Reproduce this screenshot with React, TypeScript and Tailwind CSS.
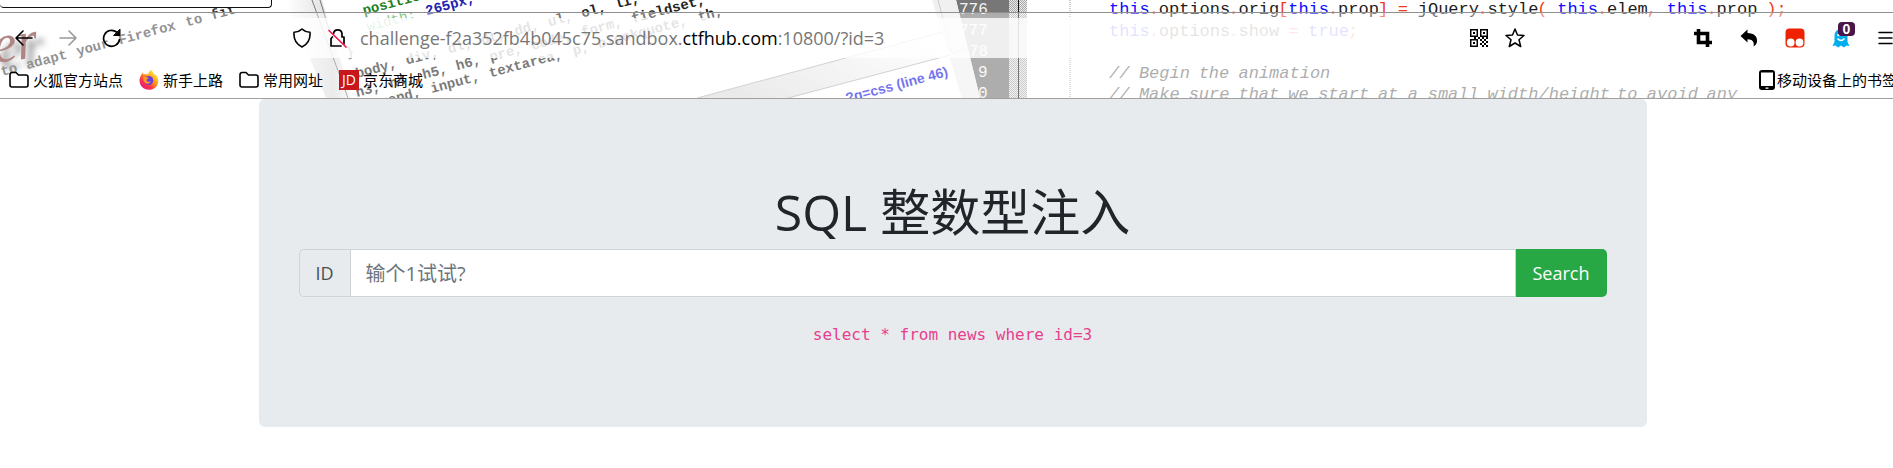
import React from "react";

type Token = { text: string; color: string; bold?: boolean };

/* Sets each word of a monospaced line on a fixed column pitch. */
function MonoLine({
  tokens,
  x,
  y,
  pitch,
  size,
  rotate = 0,
  italic = false,
}: {
  tokens: Token[];
  x: number;
  y: number;
  pitch: number;
  size: number;
  rotate?: number;
  italic?: boolean;
}) {
  const words: { text: string; col: number; color: string; bold?: boolean }[] = [];
  let col = 0;
  for (const token of tokens) {
    for (const match of token.text.matchAll(/\S+/g)) {
      words.push({ text: match[0], col: col + (match.index ?? 0), color: token.color, bold: token.bold });
    }
    col += token.text.length;
  }
  return (
    <text
      transform={`translate(${x} ${y}) rotate(${rotate})`}
      fontFamily="'Liberation Mono', monospace"
      fontSize={size}
      fontStyle={italic ? "italic" : "normal"}
    >
      {words.map((w) => (
        <tspan key={w.col} x={w.col * pitch} y={0} fill={w.color} fontWeight={w.bold ? 700 : 400}>
          {w.text}
        </tspan>
      ))}
    </text>
  );
}

const BLUE = "#0c0cff";
const RED = "#f03a1c";
const INK = "#1c1c1c";

function ThemeArtwork() {
  return (
    <svg className="absolute left-0 top-0" width="1907" height="98" viewBox="0 0 1907 98" aria-hidden="true">
      <defs>
        <linearGradient id="paper" x1="0" x2="1">
          <stop offset="0" stopColor="#fff" />
          <stop offset="0.7" stopColor="#dedede" />
          <stop offset="1" stopColor="#f6f6f6" />
        </linearGradient>
        <linearGradient id="band" x1="0" x2="1" y1="0.6" y2="0.2">
          <stop offset="0" stopColor="#dcdcdc" />
          <stop offset="1" stopColor="#ffffff" />
        </linearGradient>
        <pattern id="dither" width="2" height="2" patternUnits="userSpaceOnUse">
          <rect width="2" height="2" fill="#e9e9e9" />
          <rect width="1" height="1" fill="#a8a8a8" />
          <rect x="1" y="1" width="1" height="1" fill="#a8a8a8" />
        </pattern>
        <filter id="soft" x="-30%" y="-30%" width="160%" height="160%">
          <feGaussianBlur stdDeviation="3" />
        </filter>
      </defs>

      <text transform="translate(2 70) rotate(-8)" fontFamily="'Liberation Serif', serif" fontStyle="italic" fontSize="54" fill="#444" filter="url(#soft)">er</text>
      <text transform="translate(-5 63) rotate(-8)" fontFamily="'Liberation Serif', serif" fontStyle="italic" fontSize="54" fill="#7c3535">er</text>
      <MonoLine tokens={[{ text: "to adapt your Firefox to ", color: "#4a4a4a", bold: true }, { text: "fit", color: "#333", bold: true }]} x={2} y={76} pitch={8.7} size={14} rotate={-15} />

      <path d="M286 0H322L352 98H326Z" fill="url(#paper)" />
      <path d="M312 0L348 98M320 0L334 46" stroke="#777" strokeWidth="1" fill="none" />
      <MonoLine tokens={[{ text: "position: absolute", color: "#1d7f1d", bold: true }]} x={364} y={15} pitch={8.7} size={14} rotate={-15} />
      <MonoLine tokens={[{ text: "width: ", color: "#2f9f2f" }, { text: "265px,", color: "#2020b0", bold: true }]} x={368} y={31} pitch={8.7} size={14} rotate={-15} />
      <MonoLine tokens={[{ text: "}", color: "#222" }]} x={347} y={57} pitch={8.7} size={14} rotate={-15} />
      <MonoLine tokens={[{ text: "body, div, dl, dt, dd, ul, ol, li, h1,", color: "#222", bold: true }]} x={357} y={78} pitch={8.65} size={14} rotate={-15} />
      <MonoLine tokens={[{ text: "h3, h4, h5, h6, pre, code, form, fieldset,", color: "#222", bold: true }]} x={357} y={97} pitch={8.65} size={14} rotate={-15} />
      <MonoLine tokens={[{ text: "legend, input, textarea, p, blockquote, th,", color: "#222", bold: true }]} x={365} y={111} pitch={8.65} size={14} rotate={-15} />

      <path d="M697 98L950 30V55L790 98Z" fill="url(#band)" />
      <path d="M697 98L950 30M788 98L950 55M936 0L943 20" stroke="#b4b4b4" fill="none" />
      <text transform="translate(847 103) rotate(-15)" fontFamily="'Liberation Sans', sans-serif" fontWeight="700" fontSize="14" fill="#1616e6">?g=css (line 46)</text>

      <path d="M956 0H1009V98H980Z" fill="#777" />
      <path d="M932 0H956L980 98H962Z" fill="#f0f0f0" />
      <path d="M952 53L968 48M952 53L938 0" stroke="#c8c8c8" fill="none" />
      <rect x="1009" width="18" height="98" fill="url(#dither)" />
      <rect x="1018" width="1" height="98" fill="#111" />
      <path d="M1070 0V98" stroke="#999" strokeDasharray="1 1" />
      <g fill="#f4f4f4" fontFamily="'Liberation Mono', monospace" fontSize="16">
        <text x="959" y="14">776</text>
        <text x="959" y="35">777</text>
        <text x="969" y="56">78</text>
        <text x="978" y="77">9</text>
        <text x="978" y="98">0</text>
      </g>
      <MonoLine
        x={1109}
        y={14}
        pitch={9.96}
        size={17}
        tokens={[
          { text: "this", color: BLUE },
          { text: ".", color: RED },
          { text: "options", color: INK },
          { text: ".", color: RED },
          { text: "orig", color: INK },
          { text: "[", color: RED },
          { text: "this", color: BLUE },
          { text: ".", color: RED },
          { text: "prop", color: INK },
          { text: "] = ", color: RED },
          { text: "jQuery", color: INK },
          { text: ".", color: RED },
          { text: "style", color: INK },
          { text: "( ", color: RED },
          { text: "this", color: BLUE },
          { text: ".", color: RED },
          { text: "elem", color: INK },
          { text: ", ", color: RED },
          { text: "this", color: BLUE },
          { text: ".", color: RED },
          { text: "prop ", color: INK },
          { text: ");", color: RED },
        ]}
      />
      <MonoLine
        x={1109}
        y={36}
        pitch={9.96}
        size={17}
        tokens={[
          { text: "this", color: BLUE },
          { text: ".", color: RED },
          { text: "options", color: INK },
          { text: ".", color: RED },
          { text: "show ", color: INK },
          { text: "= ", color: RED },
          { text: "true", color: BLUE },
          { text: ";", color: RED },
        ]}
      />
      <MonoLine x={1109} y={78} pitch={9.96} size={17} italic tokens={[{ text: "// Begin the animation", color: "#777" }]} />
      <MonoLine x={1109} y={99} pitch={9.96} size={17} italic tokens={[{ text: "// Make sure that we start at a small width/height to avoid any", color: "#777" }]} />
    </svg>
  );
}

const line = { fill: "none", stroke: "currentColor", strokeLinecap: "round", strokeLinejoin: "round" } as const;

function BackIcon() {
  return (
    <svg width="20" height="20" viewBox="0 0 20 20" {...line} strokeWidth="1.6">
      <path d="M18 10H2M9 3L2 10L9 17" />
    </svg>
  );
}

function ReloadIcon() {
  return (
    <svg width="20" height="20" viewBox="0 0 20 20" {...line} strokeWidth="1.7">
      <path d="M17.5 11.5A8 8 0 1 1 14.5 4" />
      <path d="M18 1.5V7.5H12Z" fill="currentColor" strokeWidth="1" />
    </svg>
  );
}

function ShieldIcon() {
  return (
    <svg width="20" height="20" viewBox="0 0 20 20" {...line} strokeWidth="1.6">
      <path d="M10 1C12 3 15 4 18 4.2C18.6 11.5 15.5 16.5 10 19C4.5 16.5 1.4 11.5 2 4.2C5 4 8 3 10 1Z" />
    </svg>
  );
}

function InsecureIcon() {
  return (
    <svg width="20" height="20" viewBox="0 0 20 20" {...line} strokeWidth="1.7">
      <path d="M5.5 5.5A4.3 4.3 0 0 1 14 5.5V9H16V16M3 10.5V18H13M3 10.5L4.5 9" />
      <path d="M1 2.5L18 19" stroke="#f5164e" />
    </svg>
  );
}

function QrIcon() {
  return (
    <svg width="18" height="18" viewBox="0 0 18 18" fill="currentColor">
      <path fillRule="evenodd" d="M0 0H8V8H0ZM1.5 1.5V6.5H6.5V1.5ZM10 0H18V8H10ZM11.5 1.5V6.5H16.5V1.5ZM0 10H8V18H0ZM1.5 11.5V16.5H6.5V11.5Z" />
      <path d="M3 3H5V5H3ZM13 3H15V5H13ZM3 13H5V15H3ZM10 10H12V12H10ZM14 10H16V12H14ZM12 12H14V14H12ZM16 12H18V14H16ZM10 14H12V16H10ZM14 14H16V16H14ZM12 16H14V18H12ZM16 16H18V18H16ZM8 8H10V10H8ZM4 8H6V10H4ZM12 8H14V10H12ZM16 8H18V10H16Z" />
    </svg>
  );
}

function StarIcon() {
  return (
    <svg width="20" height="20" viewBox="0 0 20 20" {...line} strokeWidth="1.5">
      <path d="M10 1L12.5 7L19 7.5L14 11.8L15.7 18.5L10 15L4.3 18.5L6 11.8L1 7.5L7.5 7Z" />
    </svg>
  );
}

function CropIcon() {
  return (
    <svg width="18" height="18" viewBox="0 0 18 18" fill="none" stroke="currentColor" strokeWidth="3.6">
      <path d="M0 4.5H13.5V18M4.5 0V13.5H18" />
    </svg>
  );
}

function UndoIcon() {
  return (
    <svg width="18" height="18" viewBox="0 0 18 18" fill="currentColor">
      <path d="M7.5 0.5V4C14 4 17.5 7.5 17 12.5C16.8 14.5 15.5 16.5 13.5 17.5C14.5 13 12.5 10.2 7.5 10.2V13.5L0.5 7Z" />
    </svg>
  );
}

function TamperIcon() {
  return (
    <svg width="20" height="20" viewBox="0 0 20 20">
      <rect x="0.5" y="0.5" width="19" height="19" rx="4" fill="#ee2200" />
      <circle cx="5.7" cy="14.5" r="3.9" fill="#fff" />
      <circle cx="14.5" cy="14.5" r="3.9" fill="#fff" />
    </svg>
  );
}

function GhostIcon() {
  return (
    <svg width="18" height="20" viewBox="0 0 18 20">
      <path d="M9 1C13 1 15.5 4 15.5 8V14L17.5 18L14.5 17.5L12 19.5L9 17.5L6 19.5L3.5 17.5L0.5 18L2.5 14V8C2.5 4 5 1 9 1Z" fill="#00aef0" />
      <path d="M5.5 10.5Q9 14.5 12.5 10.5" fill="none" stroke="#fff" strokeWidth="1.5" />
      <circle cx="6.5" cy="7" r="1.3" fill="#fff" />
    </svg>
  );
}

function MenuIcon() {
  return (
    <svg width="15" height="14" viewBox="0 0 15 14" {...line} strokeWidth="1.5">
      <path d="M1 1.5H14M1 7H14M1 12.5H14" />
    </svg>
  );
}

function FolderIcon() {
  return (
    <svg width="20" height="18" viewBox="0 0 20 18" {...line} strokeWidth="1.6">
      <path d="M1 3.5A2 2 0 0 1 3 1.5H7L9.5 4H17A2 2 0 0 1 19 6V14A2 2 0 0 1 17 16H3A2 2 0 0 1 1 14Z" />
    </svg>
  );
}

function FirefoxIcon() {
  return (
    <svg width="20" height="20" viewBox="0 0 20 20">
      <defs>
        <linearGradient id="fox" x1="0.85" y1="0.1" x2="0.15" y2="0.95">
          <stop offset="0" stopColor="#fff044" />
          <stop offset="0.4" stopColor="#ff980e" />
          <stop offset="0.7" stopColor="#ff3647" />
          <stop offset="1" stopColor="#e31587" />
        </linearGradient>
      </defs>
      <path d="M12 0C14 1.5 14.5 3 15 4.5L16.5 4.5C18.5 6.5 19.5 9 19.3 11.5C19 16.3 15 19.8 10 19.8C4.5 19.8 0.5 15.5 0.5 10.5C0.5 8 1.5 6 2.5 4.5L3 2.8L4.8 4.5C6 4 8 4 9 4.5C9.5 2.5 10.5 1 12 0Z" fill="url(#fox)" />
      <circle cx="9.8" cy="10.5" r="4.5" fill="#6a3fe0" />
      <path d="M4 7C6 6 7.5 7.5 9.5 7.5C9.5 9 7.5 9 7.5 10.5C8.5 12.3 10.5 11.5 12 11.8C10.5 14 7 14.5 5.5 12C4.5 10.5 4 9 4 7Z" fill="#ff9a1c" />
    </svg>
  );
}

function PhoneIcon() {
  return (
    <svg width="16" height="20" viewBox="0 0 16 20">
      <path fillRule="evenodd" fill="currentColor" d="M3 0H13A3 3 0 0 1 16 3V17A3 3 0 0 1 13 20H3A3 3 0 0 1 0 17V3A3 3 0 0 1 3 0ZM2 2.5V16H14V2.5ZM6.5 17.5V18.7H9.5V17.5Z" />
    </svg>
  );
}

function IconButton({ label, children, className = "" }: { label: string; children: React.ReactNode; className?: string }) {
  return (
    <button type="button" aria-label={label} className={`relative flex h-8 shrink-0 items-center justify-center ${className}`}>
      {children}
    </button>
  );
}

function Bookmark({ icon, children }: { icon: React.ReactNode; children: string }) {
  return (
    <a href="#" className="flex shrink-0 items-center gap-1 whitespace-nowrap">
      {icon}
      {children}
    </a>
  );
}

function BrowserChrome() {
  return (
    <header className="relative overflow-hidden border-b border-[#a0a0a0] text-black">
      <ThemeArtwork />
      <div className="relative h-3">
        <div className="h-2 w-[272px] rounded-b border-b border-r border-[#111] bg-white" />
      </div>
      <div className="relative border-t border-[#8f8f8f] bg-white/40">
        <nav className="flex h-[50px] items-center pl-[14px] pr-3" aria-label="Navigation">
          <div className="flex gap-6">
            <IconButton label="Back" className="w-5"><BackIcon /></IconButton>
            <IconButton label="Forward" className="w-5 rotate-180 text-[#999]"><BackIcon /></IconButton>
            <IconButton label="Reload" className="w-5"><ReloadIcon /></IconButton>
          </div>
          <div className="mx-40 flex h-10 min-w-0 flex-1 items-center rounded bg-white/80 pl-[10px] pr-2">
            <IconButton label="Tracking protection" className="w-5"><ShieldIcon /></IconButton>
            <IconButton label="Connection not secure" className="ml-4 w-5"><InsecureIcon /></IconButton>
            <div
              role="textbox"
              aria-label="Address"
              contentEditable
              suppressContentEditableWarning
              className="ml-3 min-w-0 flex-1 overflow-hidden whitespace-nowrap font-['Open_Sans','Noto_Sans_CJK_SC',sans-serif] text-lg leading-6 text-[#777] outline-none"
            >
              challenge-f2a352fb4b045c75.sandbox.<span className="text-black">ctfhub.com</span>:10800/?id=3
            </div>
            <div className="flex items-center gap-4">
              <IconButton label="QR code" className="w-5"><QrIcon /></IconButton>
              <IconButton label="Bookmark this page" className="w-5"><StarIcon /></IconButton>
            </div>
          </div>
          <div className="flex items-center gap-[26px]">
            <IconButton label="Screenshot" className="w-5"><CropIcon /></IconButton>
            <IconButton label="Undo close tab" className="w-5"><UndoIcon /></IconButton>
            <IconButton label="Scripts" className="w-5"><TamperIcon /></IconButton>
            <IconButton label="Tracker blocker" className="w-5">
              <GhostIcon />
              <span className="absolute -right-1 top-0 flex h-[14px] w-[17px] items-center justify-center rounded-sm bg-[#4a1548] font-['Liberation_Sans',sans-serif] text-sm leading-none font-bold text-white">
                0
              </span>
            </IconButton>
            <IconButton label="Menu" className="w-4"><MenuIcon /></IconButton>
          </div>
        </nav>
        <nav className="flex h-[35px] items-center justify-between pb-0.5 pl-[9px] pr-2 text-[15px] leading-5" aria-label="Bookmarks">
          <div className="flex gap-4">
            <Bookmark icon={<FolderIcon />}>火狐官方站点</Bookmark>
            <Bookmark icon={<FirefoxIcon />}>新手上路</Bookmark>
            <Bookmark icon={<FolderIcon />}>常用网址</Bookmark>
            <Bookmark
              icon={
                <span className="flex size-5 items-center justify-center bg-[#c8161d] font-['Open_Sans',sans-serif] text-sm text-white">JD</span>
              }
            >
              京东商城
            </Bookmark>
          </div>
          <a href="#" className="flex items-center gap-0.5 whitespace-nowrap">
            <PhoneIcon />
            移动设备上的书签
          </a>
        </nav>
      </div>
    </header>
  );
}

export default function App() {
  return (
    <div className="overflow-hidden bg-white font-['Open_Sans','Noto_Sans_CJK_SC',sans-serif]">
      <div className="-mr-3">
        <BrowserChrome />
        <main className="mx-auto max-w-[1388px] rounded-md bg-[#e7ebee] px-10 py-20 text-center">
          <h1 className="mb-1 text-[50px] leading-[66px] text-[#212529]">SQL 整数型注入</h1>
          <form className="flex h-12 text-lg leading-[30px]" onSubmit={(e) => e.preventDefault()}>
            <label htmlFor="id" className="flex items-center rounded-l-[5px] border border-r-0 border-[#ced4da] px-4 text-[#495057]">
              ID
            </label>
            <input
              id="id"
              type="text"
              placeholder="输个1试试?"
              className="min-w-0 flex-1 border border-[#ced4da] bg-white px-[15px] pt-0.5 text-xl text-[#495057] outline-none placeholder:text-[#6c757d]"
            />
            <button type="submit" className="rounded-r-[5px] bg-[#28a745] px-[17px] text-white">
              Search
            </button>
          </form>
          <p className="mt-6 leading-[26px]">
            <code className="font-['DejaVu_Sans_Mono',monospace] text-base text-[#e83e8c]">select * from news where id=3</code>
          </p>
        </main>
      </div>
    </div>
  );
}
